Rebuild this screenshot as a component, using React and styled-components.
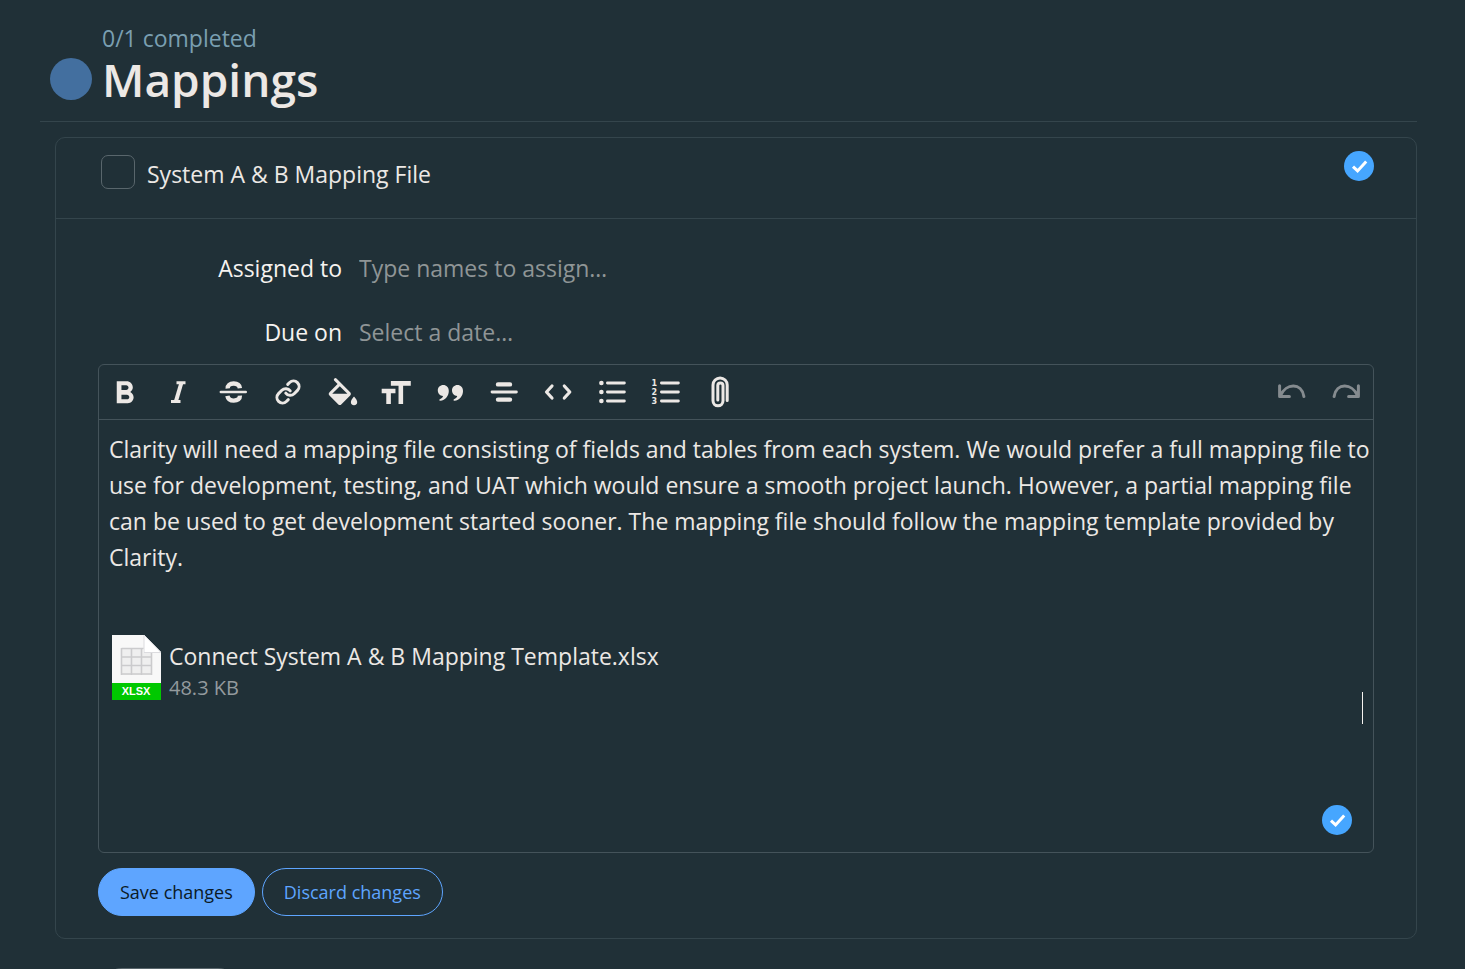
import React, {useState} from 'react';
import styled, {createGlobalStyle, ThemeProvider} from 'styled-components';
import {MdFormatBold, MdFormatSize} from 'react-icons/md';

const theme = {
  background: '#203037',
  text: '#ece8e5',
  textStrong: '#f6f3f0',
  subtext: '#7a9fb1',
  placeholder: '#8f9596',
  muted: '#939a9e',
  line: '#34454c',
  border: '#44535a',
  boxBorder: '#59666c',
  accent: '#5ea5ff',
  badge: '#46a6ff',
  dot: '#436f9f'
};

const GlobalStyle = createGlobalStyle`
  *, *::before, *::after {
    box-sizing: border-box;
  }

  html {
    scrollbar-width: none;
  }

  body {
    margin: 0;
    background: ${theme.background};
    color: ${theme.text};
    font-family: 'Segoe UI', 'Open Sans', 'Noto Sans', sans-serif;
    font-size: 23px;
    line-height: 36px;
  }

  button, input {
    font: inherit;
    color: inherit;
  }
`;

const StyledPage = styled.main`
  padding: 20px 48px 0 40px;
`;

const StyledHeader = styled.header`
  display: grid;
  grid-template-columns: 42px 1fr;
  column-gap: 10px;
  padding: 0 10px 18px;
  border-bottom: 1px solid ${props => props.theme.line};
`;

const StyledCount = styled.div`
  grid-column: 2;
  color: ${props => props.theme.subtext};
`;

const StyledDot = styled.span`
  width: 42px;
  height: 42px;
  margin-top: 2px;
  border-radius: 50%;
  background: ${props => props.theme.dot};
`;

const StyledTitle = styled.h1`
  margin: 0;
  font-size: 46px;
  font-weight: 600;
  line-height: 47px;
`;

const StyledCard = styled.section`
  margin: 15px 0 0 15px;
  border: 1px solid ${props => props.theme.line};
  border-radius: 10px;
`;

const StyledCardHeader = styled.div`
  display: flex;
  align-items: flex-start;
  justify-content: space-between;
  height: 81px;
  padding: 13px 42px 0 45px;
  border-bottom: 1px solid ${props => props.theme.line};
`;

const StyledTodoLabel = styled.label`
  display: flex;
  align-items: flex-start;
  gap: 12px;
  margin-top: 4px;
  line-height: 39px;
  cursor: pointer;
`;

const StyledCheckbox = styled.input`
  appearance: none;
  width: 34px;
  height: 34px;
  margin: 0;
  border: 1px solid ${props => props.theme.boxBorder};
  border-radius: 7px;
  cursor: pointer;

  &:checked {
    background: ${props => props.theme.badge};
  }
`;

const StyledCardBody = styled.form`
  padding: 17px 42px 22px;
`;

const StyledField = styled.div`
  display: grid;
  grid-template-columns: 244px 1fr;
  column-gap: 17px;
  align-items: center;
  height: 64px;

  label {
    color: ${props => props.theme.textStrong};
    text-align: right;
  }

  input {
    width: 100%;
    padding: 0;
    border: 0;
    outline: 0;
    background: transparent;
  }

  input::placeholder {
    color: ${props => props.theme.placeholder};
    opacity: 1;
  }
`;

const StyledEditor = styled.div`
  position: relative;
  border: 1px solid ${props => props.theme.border};
  border-radius: 6px;
`;

const StyledToolbar = styled.div`
  display: flex;
  border-bottom: 1px solid ${props => props.theme.border};
`;

const StyledToolGroup = styled.div`
  display: flex;

  & + & {
    margin-left: auto;
  }
`;

const StyledTool = styled.button`
  display: grid;
  place-items: center;
  width: 54px;
  height: 54px;
  padding: 0;
  border: 0;
  background: transparent;
  color: ${props => props.theme.text};
  cursor: pointer;

  &:disabled {
    color: #858b8f;
    cursor: default;
  }

  svg {
    display: block;
    width: 32px;
    height: 32px;
  }
`;

const StyledContent = styled.div`
  min-height: 432px;
  padding: 11px 2px 12px 10px;
  outline: 0;

  p {
    margin: 0 0 60px;
  }
`;

const StyledAttachmentRow = styled.div`
  display: flex;
  align-items: flex-start;
  justify-content: space-between;
  padding-right: 8px;
`;

const StyledAttachment = styled.figure`
  display: flex;
  gap: 8px;
  margin: 0 0 0 3px;

  figcaption {
    display: flex;
    flex-direction: column;
    padding-top: 4px;
    line-height: 34px;
  }
`;

const StyledFileSize = styled.span`
  color: ${props => props.theme.muted};
  font-size: 20px;
  line-height: 30px;
`;

const StyledCaret = styled.span`
  align-self: flex-end;
  width: 1px;
  height: 32px;
  margin-bottom: -21px;
  background: ${props => props.theme.textStrong};
`;

const StyledBadge = styled.span`
  display: grid;
  place-items: center;
  width: 30px;
  height: 30px;
  border-radius: 50%;
  background: ${props => props.theme.badge};
`;

const StyledEditorBadge = styled(StyledBadge)`
  position: absolute;
  right: 21px;
  bottom: 17px;
`;

const StyledActions = styled.div`
  display: flex;
  gap: 7px;
  margin-top: 15px;
`;

const StyledPill = styled.button`
  height: 48px;
  padding: 0 21px;
  border: 1px solid ${props => props.theme.accent};
  border-radius: 24px;
  background: ${props => (props.$primary ? props.theme.accent : 'transparent')};
  color: ${props => (props.$primary ? '#0b1a26' : props.theme.accent)};
  font-size: 18px;
  line-height: 28px;
  cursor: pointer;
`;

const StyledAddButton = styled.button`
  display: block;
  width: 144px;
  height: 48px;
  margin: 29px 0 0 58px;
  border: 1px solid ${props => props.theme.boxBorder};
  border-radius: 24px;
  background: transparent;
`;

const Icon = ({children, width = 3}) => (
  <svg
    viewBox="0 0 32 32"
    fill="none"
    stroke="currentColor"
    strokeWidth={width}
    strokeLinecap="round"
    strokeLinejoin="round"
    aria-hidden="true"
  >
    {children}
  </svg>
);

const Italic = () => (
  <Icon>
    <path d="M12.5 6.8H21.5M7 25.4h9.5" strokeLinecap="butt" />
    <path d="M17.4 6.8 11.9 25.4" strokeWidth="4" strokeLinecap="butt" />
  </Icon>
);

const Strike = () => (
  <Icon width={4.4}>
    <path d="M2.8 16H27.8" strokeWidth="2.4" />
    <path
      d="M21.9 12.2C21.4 8.6 18.7 7.5 15.7 7.5c-4 0-6.2 2-6 5M9.4 19.8c.6 3.4 3 4.8 6.4 4.8 4 0 6.2-1.8 6.1-5"
      strokeLinecap="butt"
    />
  </Icon>
);

const Link = () => (
  <svg
    viewBox="-2.4 -2.4 28.8 28.8"
    fill="none"
    stroke="currentColor"
    strokeWidth="2.7"
    strokeLinecap="round"
    aria-hidden="true"
  >
    <path d="M10 13a5 5 0 0 0 7.54.54l3-3a5 5 0 0 0-7.07-7.07l-1.72 1.71" />
    <path d="M14 11a5 5 0 0 0-7.54-.54l-3 3a5 5 0 0 0 7.07 7.07l1.71-1.71" />
  </svg>
);

const Fill = () => (
  <svg viewBox="0 0 32 32" fill="currentColor" aria-hidden="true">
    <g transform="translate(-2 2) scale(1.58)">
      <path d="M16.56 8.94 7.9.3a1 1 0 0 0-1.5 1.3l2.19 2.19-5.15 5.15a1.49 1.49 0 0 0 0 2.12l5.5 5.5a1.5 1.5 0 0 0 2.12 0l5.5-5.5c.59-.58.59-1.53 0-2.12zM5.21 10 10 5.21 14.79 10z" />
      <path d="M19 11.7s-2 2.17-2 3.5a2 2 0 0 0 4 0c0-1.33-2-3.5-2-3.5z" />
    </g>
  </svg>
);

const QUOTE =
  'M9.2 9c3.3 0 5.6 2.5 5.6 6 0 4.8-3.3 9.3-8.6 9.8-1 .1-1.3-1-.4-1.5 2-1 3-2.2 3.2-3.4-3-.1-5.2-2.4-5.2-5.4C3.8 11.3 6.2 9 9.2 9z';

const Quote = () => (
  <svg viewBox="0 0 32 32" fill="currentColor" aria-hidden="true">
    <path d={QUOTE} />
    <path d={QUOTE} transform="translate(14.2 0)" />
  </svg>
);

const Align = () => (
  <Icon>
    <path d="M10 8.4h12M10 23.6h12" strokeWidth="4.4" />
    <path d="M4 16h24.4" strokeWidth="2.8" />
  </Icon>
);

const Code = () => (
  <Icon width={3.2}>
    <path d="M10 10 4.5 16l5.5 6M22.3 10l5.5 6-5.5 6" />
  </Icon>
);

const Lines = () => <path d="M11.4 7h17M11.4 16h17M11.4 25h17" />;

const Bullets = () => (
  <Icon width={2.8}>
    <Lines />
    <path d="M5.4 7h0M5.4 16h0M5.4 25h0" strokeWidth="4.6" />
  </Icon>
);

const Numbers = () => (
  <Icon width={2.8}>
    <Lines />
    <g
      fill="currentColor"
      stroke="none"
      fontFamily="DejaVu Sans, sans-serif"
      fontWeight="700"
      fontSize="8"
    >
      <text x="1.6" y="10">1</text>
      <text x="1.6" y="19">2</text>
      <text x="1.6" y="28">3</text>
    </g>
  </Icon>
);

const Clip = () => (
  <Icon width={3}>
    <path d="M23.2 24.5V9A7.1 7.1 0 0 0 9 9v15.8a5 5 0 0 0 10 0V9.5a2.6 2.6 0 0 0-5.2 0V24" />
  </Icon>
);

const Undo = () => (
  <Icon width={3}>
    <path d="M3.6 9.8v10.6h9.8" />
    <path d="M4.6 19.4C10 7 25.6 6.6 27.9 20.4" />
  </Icon>
);

const Redo = () => (
  <Icon width={3}>
    <path d="M28.4 9.8v10.6h-9.8" />
    <path d="M27.4 19.4C22 7 6.4 6.6 4.1 20.4" />
  </Icon>
);

const Check = () => (
  <svg
    width="30"
    height="30"
    viewBox="0 0 30 30"
    fill="none"
    stroke="#fff"
    strokeWidth="3"
    aria-hidden="true"
  >
    <path d="m9 15.6 4.6 4.3 8.6-9.3" />
  </svg>
);

const FileIcon = () => (
  <svg width="49" height="65" viewBox="0 0 49 65" aria-hidden="true">
    <path d="M0 0h32l17 17v48H0z" fill="#f8f8f8" />
    <path d="M32 0v17.5h17z" fill="#fff" stroke="#dcdcdf" />
    <path d="M9 14h23v4h8v22H9z" fill="#efefef" />
    <path
      d="M9.5 13.5h22M9.5 22h30M9.5 30.5h30M9.5 39h30M9.5 13v27M19.5 13v27M29.5 13v27M39.5 18v22"
      fill="none"
      stroke="#cbcbcd"
      strokeWidth="1.6"
    />
    <path d="M0 48h49v17H0z" fill="#00c800" />
    <text
      x="24"
      y="60"
      fill="#fff"
      fontFamily="Liberation Sans, Arial, sans-serif"
      fontSize="11"
      fontWeight="700"
      textAnchor="middle"
    >
      XLSX
    </text>
  </svg>
);

const TOOLS = [
  {label: 'Bold', icon: <MdFormatBold viewBox="2.7 .6 20.4 20.4" />},
  {label: 'Italic', icon: <Italic />},
  {label: 'Strikethrough', icon: <Strike />},
  {label: 'Link', icon: <Link />},
  {label: 'Color', icon: <Fill />},
  {label: 'Heading', icon: <MdFormatSize viewBox="1.9 .7 20.9 20.9" />},
  {label: 'Quote', icon: <Quote />},
  {label: 'Divider', icon: <Align />},
  {label: 'Code', icon: <Code />},
  {label: 'Bulleted list', icon: <Bullets />},
  {label: 'Numbered list', icon: <Numbers />},
  {label: 'Attach files', icon: <Clip />}
];

const Toolbar = () => (
  <StyledToolbar role="toolbar" aria-label="Formatting">
    <StyledToolGroup>
      {TOOLS.map(({label, icon}) => (
        <StyledTool key={label} type="button" aria-label={label}>
          {icon}
        </StyledTool>
      ))}
    </StyledToolGroup>
    <StyledToolGroup>
      <StyledTool type="button" aria-label="Undo" disabled>
        <Undo />
      </StyledTool>
      <StyledTool type="button" aria-label="Redo" disabled>
        <Redo />
      </StyledTool>
    </StyledToolGroup>
  </StyledToolbar>
);

const App = () => {
  const [done, setDone] = useState(false);

  return (
    <ThemeProvider theme={theme}>
      <GlobalStyle />
      <StyledPage>
        <StyledHeader>
          <StyledCount>0/1 completed</StyledCount>
          <StyledDot />
          <StyledTitle>Mappings</StyledTitle>
        </StyledHeader>

        <StyledCard>
          <StyledCardHeader>
            <StyledTodoLabel>
              <StyledCheckbox
                type="checkbox"
                checked={done}
                onChange={e => setDone(e.target.checked)}
              />
              System A &amp; B Mapping File
            </StyledTodoLabel>
            <StyledBadge>
              <Check />
            </StyledBadge>
          </StyledCardHeader>

          <StyledCardBody onSubmit={e => e.preventDefault()}>
            <StyledField>
              <label htmlFor="assignees">Assigned to</label>
              <input
                id="assignees"
                type="text"
                placeholder="Type names to assign…"
              />
            </StyledField>
            <StyledField>
              <label htmlFor="due-on">Due on</label>
              <input id="due-on" type="text" placeholder="Select a date…" />
            </StyledField>

            <StyledEditor>
              <Toolbar />
              <StyledContent
                role="textbox"
                aria-multiline="true"
                aria-label="Notes"
                contentEditable
                suppressContentEditableWarning
                spellCheck={false}
              >
                <p>
                  Clarity will need a mapping file consisting of fields and
                  tables from each system. We would prefer a full mapping file
                  to use for development, testing, and UAT which would ensure a
                  smooth project launch. However, a partial mapping file can be
                  used to get development started sooner. The mapping file
                  should follow the mapping template provided by Clarity.
                </p>
                <StyledAttachmentRow>
                  <StyledAttachment>
                    <FileIcon />
                    <figcaption>
                      <span>Connect System A &amp; B Mapping Template.xlsx</span>
                      <StyledFileSize>48.3 KB</StyledFileSize>
                    </figcaption>
                  </StyledAttachment>
                  <StyledCaret />
                </StyledAttachmentRow>
              </StyledContent>
              <StyledEditorBadge>
                <Check />
              </StyledEditorBadge>
            </StyledEditor>

            <StyledActions>
              <StyledPill type="submit" $primary>
                Save changes
              </StyledPill>
              <StyledPill type="button">Discard changes</StyledPill>
            </StyledActions>
          </StyledCardBody>
        </StyledCard>

        <StyledAddButton type="button" aria-label="Add a to-do" />
      </StyledPage>
    </ThemeProvider>
  );
};

export default App;
